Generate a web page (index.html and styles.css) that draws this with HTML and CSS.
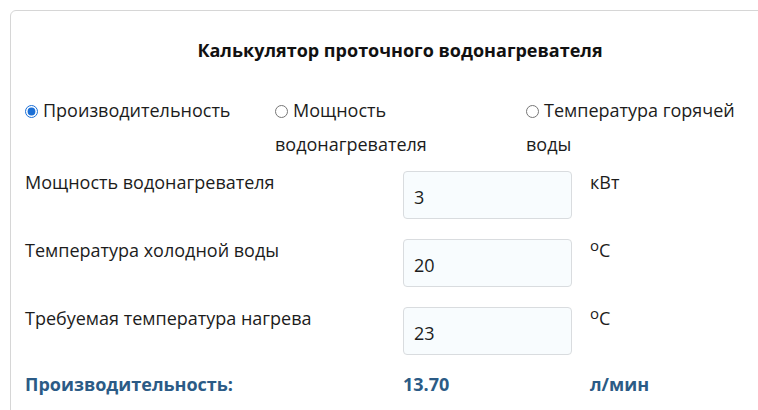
FILE: index.html
```html
<!DOCTYPE html>
<html lang="ru">
<head>
  <meta charset="UTF-8" />
  <meta name="viewport" content="width=device-width, initial-scale=1.0"/>
  <title>Калькулятор проточного водонагревателя</title>
  <link rel="stylesheet" href="styles.css">
</head>
<body>

  <div class="calc">
    <div class="calc-title">Калькулятор проточного водонагревателя</div>

    <div class="modes">
      <label class="mode"><input type="radio" name="mode" checked>Производительность</label>
      <label class="mode"><input type="radio" name="mode">Мощность водонагревателя</label>
      <label class="mode"><input type="radio" name="mode">Температура горячей воды</label>
    </div>

    <div class="fields">
      <div class="field-label">Мощность водонагревателя</div>
      <input class="field-input" type="text" value="3">
      <div class="field-unit">кВт</div>

      <div class="field-label">Температура холодной воды</div>
      <input class="field-input" type="text" value="20">
      <div class="field-unit"><sup>o</sup>C</div>

      <div class="field-label">Требуемая температура нагрева</div>
      <input class="field-input" type="text" value="23">
      <div class="field-unit"><sup>o</sup>C</div>

      <div class="result">Производительность:</div>
      <div class="result">13.70</div>
      <div class="result">л/мин</div>
    </div>
  </div>

</body>
</html>
```

FILE: styles.css
```css
body {
  font-family: 'Open Sans', sans-serif;
  background: #fff;
  color: #1c1c1c;
  margin: 0;
  padding: 10px;
  overflow: hidden;
}
.calc {
  width: 750px;
  height: 396px;
  border: 1px solid #d6d6d6;
  border-radius: 6px;
  padding: 26px 14px 0 14px;
}
.calc-title {
  text-align: center;
  font-size: 18px;
  font-weight: 700;
  line-height: 26px;
  color: #111;
}
.modes {
  display: grid;
  grid-template-columns: 250px 251px 232px;
  margin-top: 30px;
  font-size: 18px;
  line-height: 34px;
}
.mode input {
  margin: 0 5px 0 0;
  width: 13px;
  height: 13px;
  vertical-align: -1px;
  accent-color: #1b6fd6;
}
.fields {
  display: grid;
  grid-template-columns: 360px 169px 1fr;
  column-gap: 18px;
  row-gap: 20px;
  margin-top: 10px;
  font-size: 18px;
  line-height: 22px;
}
.field-input {
  width: 169px;
  height: 48px;
  box-sizing: border-box;
  border: 1px solid #d9dcdf;
  border-radius: 4px;
  background: #f8fcfe;
  padding: 4px 10px 0 10px;
  font-family: 'Open Sans', sans-serif;
  font-size: 18px;
  color: #1c1c1c;
}
.field-unit sup {
  font-size: 15px;
  vertical-align: 6px;
  line-height: 0;
}
.result {
  font-weight: 700;
  color: #2b5b86;
  margin-top: -2px;
}
```
